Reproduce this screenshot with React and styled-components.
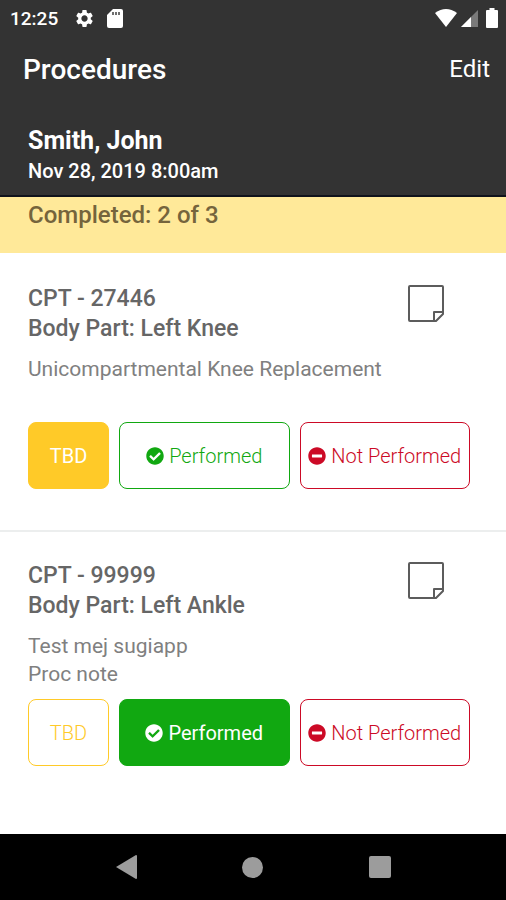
import React, { useState } from "react";
import styled, { createGlobalStyle } from "styled-components";
import { FaCheckCircle, FaMinusCircle } from "react-icons/fa";
import { MdSettings } from "react-icons/md";

const GlobalStyle = createGlobalStyle`
  * {
    box-sizing: border-box;
  }

  body {
    margin: 0;
    font-family: Roboto, "Liberation Sans", sans-serif;
    background: #fff;
  }

  h1, h2, h3, p {
    margin: 0;
  }
`;

const colors = {
  yellow: "#ffca28",
  green: "#11a811",
  red: "#cc0a26",
};

const Screen = styled.div`
  display: flex;
  flex-direction: column;
  min-height: 100vh;
`;

const StatusBar = styled.div`
  display: flex;
  align-items: center;
  justify-content: space-between;
  height: 36px;
  padding: 0 8px 0 10px;
  background: #333;
  color: #fff;
`;

const StatusGroup = styled.div`
  display: flex;
  align-items: center;
  gap: ${(props) => props.$gap}px;
`;

const Clock = styled.span`
  margin-right: 4px;
  font-size: 19px;
  font-weight: 500;
`;

const Toolbar = styled.header`
  display: flex;
  align-items: center;
  justify-content: space-between;
  height: 72px;
  padding: 0 16px 6px 23px;
  background: #333;
  color: #fff;
`;

const Title = styled.h1`
  font-size: 28px;
  font-weight: 500;
`;

const EditButton = styled.button`
  padding: 0;
  border: 0;
  background: none;
  color: #fff;
  font: inherit;
  font-size: 24px;
`;

const Patient = styled.section`
  height: 89px;
  padding: 18px 28px 0;
  border-bottom: 2px solid #10131c;
  background: #333;
  color: #fff;
`;

const PatientName = styled.h2`
  font-size: 25px;
  font-weight: 700;
  line-height: 30px;
`;

const VisitTime = styled.p`
  font-size: 20px;
  font-weight: 500;
  line-height: 30px;
`;

const Progress = styled.p`
  height: 56px;
  padding: 3px 28px;
  background: #ffe999;
  color: #75643c;
  font-size: 24px;
  font-weight: 500;
  line-height: 30px;
`;

const List = styled.main`
  flex: 1;
`;

const Item = styled.article`
  padding: 31px 36px 41px 28px;

  & + & {
    padding-top: 29px;
    border-top: 2px solid #eceeee;
  }
`;

const ItemHead = styled.div`
  display: flex;
  justify-content: space-between;
  padding-right: 26px;
`;

const ItemTitle = styled.h3`
  color: #666;
  font-size: 23px;
  font-weight: 500;
  line-height: 30px;
`;

const NoteButton = styled.button`
  align-self: flex-start;
  display: flex;
  padding: 1px 0;
  border: 0;
  background: none;
  color: #5c5c5c;
`;

const Description = styled.p`
  min-height: 56px;
  margin: 11px 0;
  color: #808080;
  font-size: 21px;
  font-weight: 400;
  line-height: 28px;
  white-space: pre-line;
`;

const Actions = styled.div`
  display: grid;
  grid-template-columns: 81px 1fr 1fr;
  gap: 10px;
`;

const StatusButton = styled.button`
  display: flex;
  align-items: center;
  justify-content: center;
  gap: 5px;
  height: 67px;
  padding: 0;
  border: 1px solid ${(props) => props.$color};
  border-radius: 8px;
  background: ${(props) => (props.$active ? props.$color : "#fff")};
  color: ${(props) => (props.$active ? "#fff" : props.$color)};
  font: inherit;
  font-size: 20px;
  font-weight: ${(props) => (props.$active ? 400 : 300)};
  white-space: nowrap;

  svg {
    flex: none;
  }
`;

const NavBar = styled.nav`
  display: grid;
  grid-template-columns: repeat(3, 1fr);
  justify-items: center;
  align-items: center;
  height: 66px;
  padding: 0 63px;
  background: #000;
`;

const NavButton = styled.button`
  display: flex;
  padding: 0;
  border: 0;
  background: none;
  color: #9c9c9c;
`;

function SdCardIcon() {
  return (
    <svg width="16" height="19" viewBox="0 0 16 19" fill="currentColor">
      <path d="M6 0h8a2 2 0 0 1 2 2v15a2 2 0 0 1-2 2H2a2 2 0 0 1-2-2V6z" />
      <path d="M6 3v3M9 3v3M12 3v3" stroke="#333" strokeWidth="1.4" />
    </svg>
  );
}

function WifiIcon() {
  return (
    <svg width="22" height="18" viewBox="0 0 22 18" fill="currentColor">
      <path d="M0 4Q11-4 22 4L11 18z" />
    </svg>
  );
}

function SignalIcon() {
  return (
    <svg width="17" height="17" viewBox="0 0 17 17" fill="currentColor">
      <path d="M17 0v17H0z" opacity="0.35" />
      <path d="M10 7v10H0z" />
    </svg>
  );
}

function BatteryIcon() {
  return (
    <svg width="12" height="20" viewBox="0 0 12 20" fill="currentColor">
      <path d="M3.5 0h5v2H11a1 1 0 0 1 1 1v16a1 1 0 0 1-1 1H1a1 1 0 0 1-1-1V3a1 1 0 0 1 1-1h2.500z" />
    </svg>
  );
}

function NoteIcon() {
  return (
    <svg
      width="36"
      height="37"
      viewBox="0 0 36 37"
      fill="none"
      stroke="currentColor"
      strokeWidth="2"
      strokeLinejoin="round"
    >
      <path d="M2 1h32a1 1 0 0 1 1 1v27l-7 7H2a1 1 0 0 1-1-1V2a1 1 0 0 1 1-1z" />
      <path d="M26 36v-9h9" />
    </svg>
  );
}

const statuses = [
  { id: "tbd", label: "TBD", color: colors.yellow },
  { id: "done", label: "Performed", color: colors.green, Icon: FaCheckCircle },
  { id: "not", label: "Not Performed", color: colors.red, Icon: FaMinusCircle },
];

function Procedure({ procedure, onChange }) {
  return (
    <Item>
      <ItemHead>
        <ItemTitle>
          CPT - {procedure.cpt}
          <br />
          Body Part: {procedure.bodyPart}
        </ItemTitle>
        <NoteButton aria-label="Note">
          <NoteIcon />
        </NoteButton>
      </ItemHead>
      <Description>{procedure.description}</Description>
      <Actions>
        {statuses.map(({ id, label, color, Icon }) => (
          <StatusButton
            key={id}
            $color={color}
            $active={procedure.status === id}
            aria-pressed={procedure.status === id}
            onClick={() => onChange(id)}
          >
            {Icon && <Icon size={18} />}
            {label}
          </StatusButton>
        ))}
      </Actions>
    </Item>
  );
}

function App() {
  const [procedures, setProcedures] = useState([
    {
      cpt: "27446",
      bodyPart: "Left Knee",
      description: "Unicompartmental Knee Replacement",
      status: "tbd",
    },
    {
      cpt: "99999",
      bodyPart: "Left Ankle",
      description: "Test mej sugiapp\nProc note",
      status: "done",
    },
  ]);

  function changeStatus(cpt, status) {
    setProcedures(
      procedures.map((item) => (item.cpt === cpt ? { ...item, status } : item))
    );
  }

  return (
    <Screen>
      <GlobalStyle />
      <StatusBar>
        <StatusGroup $gap={12}>
          <Clock>12:25</Clock>
          <MdSettings size={21} />
          <SdCardIcon />
        </StatusGroup>
        <StatusGroup $gap={4}>
          <WifiIcon />
          <SignalIcon />
          <span />
          <BatteryIcon />
        </StatusGroup>
      </StatusBar>
      <Toolbar>
        <Title>Procedures</Title>
        <EditButton>Edit</EditButton>
      </Toolbar>
      <Patient>
        <PatientName>Smith, John</PatientName>
        <VisitTime>Nov 28, 2019 8:00am</VisitTime>
      </Patient>
      <Progress>Completed: 2 of 3</Progress>
      <List>
        {procedures.map((item) => (
          <Procedure
            key={item.cpt}
            procedure={item}
            onChange={(status) => changeStatus(item.cpt, status)}
          />
        ))}
      </List>
      <NavBar>
        <NavButton aria-label="Back">
          <svg width="21" height="24" viewBox="0 0 21 24" fill="currentColor">
            <path d="M20 0q1 0 1 1v22q0 1-1 1L0 12z" />
          </svg>
        </NavButton>
        <NavButton aria-label="Home">
          <svg width="21" height="21" viewBox="0 0 21 21" fill="currentColor">
            <circle cx="10.500" cy="10.500" r="10.500" />
          </svg>
        </NavButton>
        <NavButton aria-label="Recent apps">
          <svg width="22" height="22" viewBox="0 0 22 22" fill="currentColor">
            <rect width="22" height="22" rx="2" />
          </svg>
        </NavButton>
      </NavBar>
    </Screen>
  );
}

export default App;
